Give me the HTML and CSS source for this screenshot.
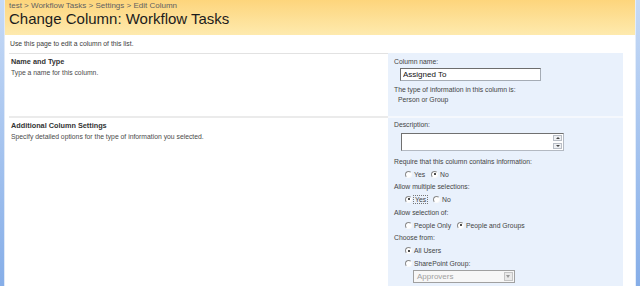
FILE: index.html
```html
<!DOCTYPE html>
<html lang="en">
<head>
    <meta charset="UTF-8">
    <title>Change Column: Workflow Tasks</title>
    <link rel="stylesheet" href="styles.css">
</head>
<body>
    <div class="frame">
        <div class="edge edge-left"></div>

        <div class="page">
            <div class="title-bar">
                <div class="crumbs">test &gt; Workflow Tasks &gt; Settings &gt; Edit Column</div>
                <h1>Change Column: Workflow Tasks</h1>
            </div>

            <div class="intro">Use this page to edit a column of this list.</div>

            <div class="section">
                <div class="section-info">
                    <h3>Name and Type</h3>
                    <p>Type a name for this column.</p>
                </div>
                <div class="section-fields">
                    <div class="label">Column name:</div>
                    <input class="text-box" type="text" value="Assigned To">
                    <div class="note">The type of information in this column is:</div>
                    <div class="note indent">Person or Group</div>
                </div>
            </div>

            <div class="section second">
                <div class="section-info">
                    <h3>Additional Column Settings</h3>
                    <p>Specify detailed options for the type of information you selected.</p>
                </div>
                <div class="section-fields">
                    <div class="label top">Description:</div>
                    <div class="memo">
                        <div class="memo-scroll">
                            <span class="arrow up"></span>
                            <span class="arrow down"></span>
                        </div>
                    </div>

                    <div class="label first-q">Require that this column contains information:</div>
                    <div class="options">
                        <label class="opt"><span class="radio"></span>Yes</label>
                        <label class="opt"><span class="radio on"></span>No</label>
                    </div>

                    <div class="label tight">Allow multiple selections:</div>
                    <div class="options">
                        <label class="opt"><span class="radio on"></span><span class="focus">Yes</span></label>
                        <label class="opt"><span class="radio"></span>No</label>
                    </div>

                    <div class="label">Allow selection of:</div>
                    <div class="options">
                        <label class="opt"><span class="radio"></span>People Only</label>
                        <label class="opt"><span class="radio on"></span>People and Groups</label>
                    </div>

                    <div class="label tight">Choose from:</div>
                    <div class="options tall">
                        <label class="opt"><span class="radio on"></span>All Users</label>
                    </div>
                    <div class="options tall">
                        <label class="opt"><span class="radio"></span>SharePoint Group:</label>
                    </div>
                    <div class="select">
                        <span>Approvers</span>
                        <span class="select-btn"></span>
                    </div>
                </div>
            </div>
        </div>

        <div class="edge edge-right"></div>
    </div>
</body>
</html>
```

FILE: styles.css
```css
body {
    margin: 0;
    font-family: 'Liberation Sans', Arial, sans-serif;
    background-color: #fff;
    overflow: hidden;
}

.frame {
    display: flex;
    height: 286px;
}

.edge {
    background: linear-gradient(#c6daf6, #86aee8);
}

.edge-left {
    border-right: 1px solid #dfe9f7;
    width: 4px;
}

.edge-right {
    border-left: 1px solid #e4edf9;
    width: 4px;
}

.page {
    flex: 1;
    display: flex;
    flex-direction: column;
}

/* yellow title area */
.title-bar {
    height: 35px;
    box-sizing: border-box;
    padding: 1px 0 0 4px;
    background: linear-gradient(#fdd57c, #feeaae);
}

.crumbs {
    font-size: 8px;
    line-height: 9px;
    color: #5f5f5f;
}

h1 {
    margin: 0;
    font-size: 15px;
    line-height: 17px;
    font-weight: normal;
    color: #1c1c1c;
}

.intro {
    height: 18px;
    line-height: 18px;
    padding-left: 5px;
    font-size: 6.8px;
    color: #3c3c3c;
}

/* form sections */
.section {
    display: flex;
    height: 63px;
    margin: 0 12px 0 4px;
}

.section.second {
    flex: 1;
}

.section-info {
    flex: 1;
    padding: 2px 0 0 2px;
    border-top: 1px solid #e2e2e2;
}

.second .section-info {
    border-top: 2px solid #ebebeb;
}

.section-info h3 {
    margin: 0;
    font-size: 7.3px;
    line-height: 11px;
    color: #333;
}

.section-info p {
    margin: 0;
    font-size: 6.8px;
    line-height: 11px;
    color: #4a4a4a;
}

.section-fields {
    width: 235px;
    box-sizing: border-box;
    padding: 3px 0 0 6px;
    background-color: #e9f1fc;
    font-size: 6.8px;
    color: #444;
}

.second .section-fields {
    border-top: 2px solid #f5f8fd;
    padding-top: 1px;
}

.label {
    line-height: 11px;
}

.second .label {
    line-height: 12px;
    margin-top: 2px;
}

.second .label.top {
    margin-top: 0;
}

.second .label.tight {
    margin-top: 1px;
}

.second .label.first-q {
    margin-top: 5px;
}

.text-box {
    display: block;
    width: 141px;
    height: 13px;
    box-sizing: border-box;
    margin: 1px 0 0 6px;
    padding: 0 2px;
    border: 1px solid #a5acb5;
    border-top-color: #6d6d6d;
    border-left-color: #6d6d6d;
    font-family: 'Liberation Sans', Arial, sans-serif;
    font-size: 8px;
    color: #111;
    outline: none;
}

.note {
    line-height: 10px;
}

.text-box + .note {
    margin-top: 4px;
}

.note.indent {
    padding-left: 4px;
}

.memo {
    display: flex;
    justify-content: flex-end;
    width: 163px;
    height: 18px;
    box-sizing: border-box;
    margin: 2px 0 0 7px;
    background: #fff;
    border: 1px solid #b3b9c2;
    border-top-color: #707070;
    border-left-color: #707070;
}

.memo-scroll {
    width: 9px;
    display: flex;
    flex-direction: column;
    justify-content: space-between;
    padding: 1px 1px 1px 0;
}

.arrow {
    position: relative;
    height: 6px;
    background: #eef0f3;
    border: 1px solid #b9bec6;
    box-sizing: border-box;
}

.arrow::after {
    content: "";
    position: absolute;
    left: 2px;
    top: 1px;
    border-left: 2px solid transparent;
    border-right: 2px solid transparent;
}

.arrow.up::after {
    border-bottom: 2px solid #444;
}

.arrow.down::after {
    border-top: 2px solid #444;
}

.options {
    display: flex;
    gap: 6px;
    height: 12px;
    align-items: center;
    padding-left: 11px;
}

.options.tall {
    height: 13px;
}

.opt {
    display: flex;
    align-items: center;
    gap: 2px;
    color: #444;
}

.radio {
    position: relative;
    width: 7px;
    height: 7px;
    box-sizing: border-box;
    border-radius: 50%;
    background: #fff;
    border: 1px solid #fafafa;
    border-top-color: #8a8a8a;
    border-left-color: #8a8a8a;
}

.radio.on::after {
    content: "";
    position: absolute;
    left: 1.5px;
    top: 1.5px;
    width: 2px;
    height: 2px;
    border-radius: 50%;
    background: #111;
}

.focus {
    outline: 1px dotted #777;
    padding: 0 1px;
}

.select {
    display: flex;
    align-items: center;
    justify-content: space-between;
    width: 102px;
    height: 13px;
    box-sizing: border-box;
    margin: 0 0 0 19px;
    padding: 0 1px 0 3px;
    background: #f7f7f7;
    border: 1px solid #a0a0a0;
    font-size: 8px;
    color: #a0a0a0;
}

.select-btn {
    position: relative;
    width: 9px;
    height: 9px;
    box-sizing: border-box;
    background: #e9e9e9;
    border: 1px solid #c4c4c4;
}

.select-btn::after {
    content: "";
    position: absolute;
    left: 1px;
    top: 2px;
    border-left: 2.5px solid transparent;
    border-right: 2.5px solid transparent;
    border-top: 3px solid #999;
}
```
